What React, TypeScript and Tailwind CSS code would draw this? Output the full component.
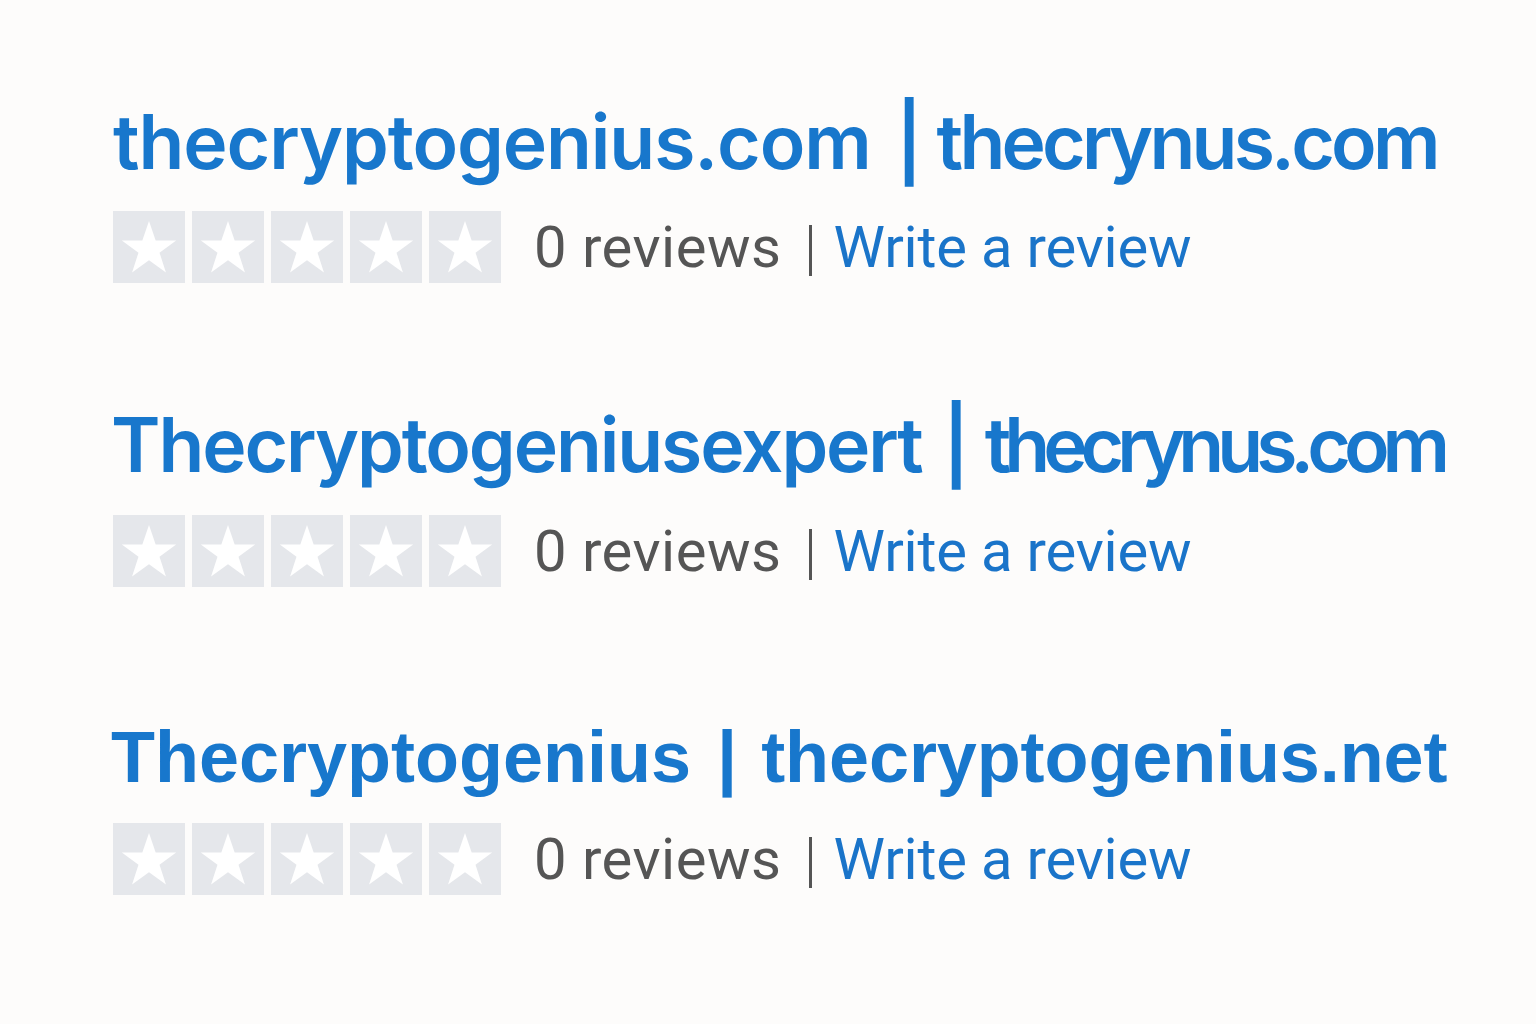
import React from "react";

const Star = () => (
  <div className="w-[72px] h-[72px] bg-[#e5e7eb] flex items-center justify-center">
    <svg width="62" height="59" viewBox="0 0 24 23">
      <path d="M12 1.2l2.6 7.6h8l-6.5 4.7 2.5 7.7L12 16.5l-6.6 4.7 2.5-7.7L1.4 8.8h8z" fill="#ffffff" />
    </svg>
  </div>
);

type RowProps = {
  left: string;
  right: string;
  fontClass: string;
  leftClass: string;
  pipeClass: string;
  rightClass: string;
  rowClass: string;
  starsClass: string;
};

const Row = ({ left, right, fontClass, leftClass, pipeClass, rightClass, rowClass, starsClass }: RowProps) => (
  <div className={`flex flex-col ${rowClass}`}>
    <div className={`flex items-baseline whitespace-nowrap leading-none text-[#1877cc] ${fontClass}`}>
      <span className={leftClass}>{left}</span>
      <span className={pipeClass}>|</span>
      <span className={rightClass}>{right}</span>
    </div>
    <div className={`flex items-center ${starsClass}`}>
      <div className="flex gap-[7px]">
        <Star />
        <Star />
        <Star />
        <Star />
        <Star />
      </div>
      <div className="ml-[33px] text-[58px] leading-none font-['Roboto',sans-serif] flex items-center whitespace-nowrap">
        <span className="text-[#555555] tracking-[0.5px]">0 reviews</span>
        <span className="ml-[28px] mr-[21px] w-[3px] h-[51px] bg-[#555555] translate-y-[3px]" />
        <span className="text-[#1a74c9] tracking-[-0.2px]">Write a review</span>
      </div>
    </div>
  </div>
);

export default function App() {
  return (
    <div className="w-[1536px] h-[1024px] bg-[#fdfcfb] pl-[113px] pt-[104px] flex flex-col">
      <Row
        rowClass=""
        starsClass="mt-[32px]"
        left="thecryptogenius.com"
        right="thecrynus.com"
        fontClass="text-[75px] font-semibold font-['Inter',sans-serif]"
        leftClass="tracking-[-1.1px]"
        pipeClass="ml-[25px]"
        rightClass="ml-[14px] tracking-[-3.8px]"
      />
      <Row
        rowClass="mt-[124px]"
        starsClass="mt-[33px]"
        left="Thecryptogeniusexpert"
        right="thecrynus.com"
        fontClass="text-[75px] font-semibold font-['Inter',sans-serif]"
        leftClass="-ml-[2px] tracking-[-2.1px]"
        pipeClass="ml-[21px]"
        rightClass="ml-[15px] tracking-[-7px]"
      />
      <Row
        rowClass="mt-[134px]"
        starsClass="mt-[30px]"
        left="Thecryptogenius"
        right="thecryptogenius.net"
        fontClass="text-[72px] font-bold font-['Liberation_Sans',sans-serif]"
        leftClass="-ml-[2px]"
        pipeClass="ml-[26px]"
        rightClass="ml-[24px] tracking-[-0.1px]"
      />
    </div>
  );
}
